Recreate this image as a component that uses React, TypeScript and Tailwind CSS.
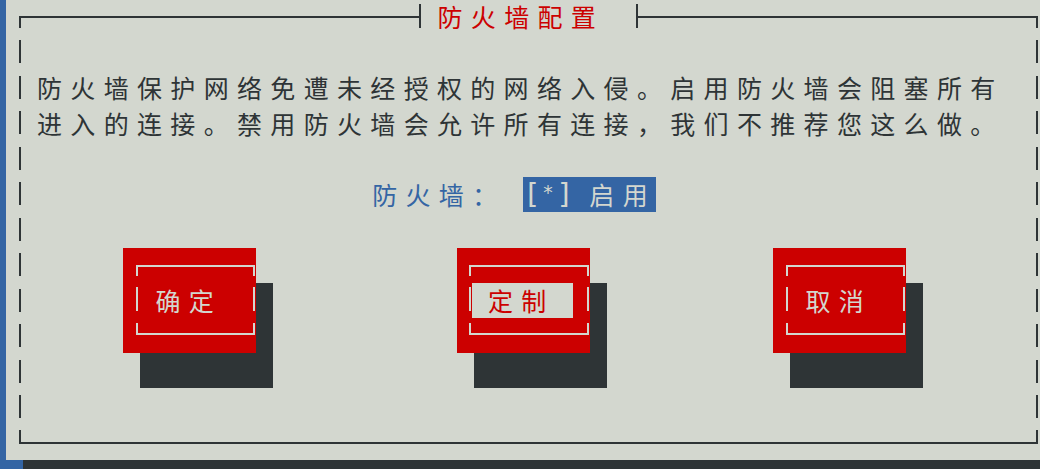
import React from 'react';

const cjk = { fontFamily: '"Noto Sans CJK SC", "Noto Sans", sans-serif' };
const mono = { fontFamily: '"DejaVu Sans Mono", monospace' };

// dashed side border, one dash per terminal row
function Dashes() {
    return (
        <div className="flex flex-col w-[2px] shrink-0">
            {Array.from({ length: 11 }).map((_, i) => (
                <div key={i} className="h-[35.5px] pt-[5.5px]">
                    <div className="h-[23px] bg-[#2e3436]" />
                </div>
            ))}
        </div>
    );
}

function Button({ label, focused }: { label: string; focused?: boolean }) {
    return (
        <div className="relative w-[133px] h-[105px] shrink-0">
            <div className="absolute left-[17px] top-[35px] w-[133px] h-[105px] bg-[#2e3436]" />
            <div className="relative h-full bg-[#cc0000] pt-[17px] pl-[12.7px] pr-[1px]">
                <div className="h-[11.5px] border-t-2 border-x-2 border-[#d3d7cf]" />
                <div className="mt-[6.5px] h-[35px] flex">
                    <div className="w-[2px] h-[24px] mt-[4.5px] bg-[#d3d7cf]" />
                    <div
                        className={
                            focused
                                ? 'ml-[1px] w-[101px] h-full flex items-center pl-[15.5px] bg-[#d3d7cf] text-[#cc0000] text-[25px] leading-none tracking-[8.33px] whitespace-nowrap'
                                : 'ml-[1px] w-[101px] h-full flex items-center pl-[16.5px] text-[#d3d7cf] text-[25px] leading-none tracking-[8.33px] whitespace-nowrap'
                        }
                        style={cjk}
                    >
                        {label}
                    </div>
                    <div className="ml-auto w-[2px] h-[24px] mt-[4.5px] bg-[#d3d7cf]" />
                </div>
                <div className="mt-[5px] h-[12.7px] border-b-2 border-x-2 border-[#d3d7cf]" />
            </div>
        </div>
    );
}

export default function App() {
    return (
        <div className="w-[1040px] h-[469px] bg-[#3465a4] overflow-hidden flex flex-col">
            <div className="ml-[6px] w-[1034px] h-[460px] shrink-0 bg-[#d3d7cf]">
                <div className="ml-[12.5px] w-[1019px] flex flex-col">
                    {/* top border with title */}
                    <div className="h-[34.5px] flex items-start">
                        <div className="w-[400.5px] h-[12px] mt-[16px] border-t-2 border-l-2 border-[#2e3436]" />
                        <div className="w-[2px] h-[24px] mt-[4px] bg-[#2e3436]" />
                        <div
                            className="w-[214.7px] h-[32px] flex items-center pl-[16.5px] text-[25px] leading-none tracking-[8.33px] text-[#cc0000] whitespace-nowrap"
                            style={cjk}
                        >
                            防火墙配置
                        </div>
                        <div className="w-[2px] h-[24px] mt-[4px] bg-[#2e3436]" />
                        <div className="flex-1 h-[12px] mt-[16px] border-t-2 border-r-2 border-[#2e3436]" />
                    </div>

                    <div className="flex h-[390.5px]">
                        <Dashes />
                        <div className="flex-1 flex flex-col">
                            <div className="h-[35.5px]" />
                            <div
                                className="pl-[16.5px] text-[25px] leading-[35.5px] tracking-[8.33px] text-[#2e3436] whitespace-nowrap"
                                style={cjk}
                            >
                                <div>防火墙保护网络免遭未经授权的网络入侵。启用防火墙会阻塞所有</div>
                                <div>进入的连接。禁用防火墙会允许所有连接，我们不推荐您这么做。</div>
                            </div>
                            <div className="h-[35.5px]" />
                            <div className="h-[35.5px] flex items-center pl-[351.7px]">
                                <div
                                    className="w-[133.8px] text-[25px] leading-none tracking-[8.33px] text-[#3465a4] whitespace-nowrap"
                                    style={cjk}
                                >
                                    防火墙：
                                </div>
                                <div className="ml-[17px] w-[133px] h-[35px] bg-[#3465a4] flex items-center text-[#d3d7cf] whitespace-nowrap">
                                    <span className="w-[16.67px] text-[29px] leading-none" style={mono}>[</span>
                                    <span className="w-[16.67px] h-full pt-[6px] text-[19px] leading-none text-center" style={mono}>*</span>
                                    <span className="w-[16.67px] text-[29px] leading-none text-center" style={mono}>]</span>
                                    <span className="w-[16.67px]" />
                                    <span className="text-[25px] leading-none tracking-[8.33px]" style={cjk}>启用</span>
                                </div>
                            </div>
                            <div className="h-[35.5px]" />
                            <div className="flex pl-[102.8px]">
                                <Button label="确定" />
                                <div className="w-[200.4px] shrink-0" />
                                <Button label="定制" focused />
                                <div className="w-[183.6px] shrink-0" />
                                <Button label="取消" />
                            </div>
                        </div>
                        <Dashes />
                    </div>

                    {/* bottom border */}
                    <div className="h-[35.5px]">
                        <div className="mt-[5px] h-[14px] border-b-2 border-x-2 border-[#2e3436]" />
                    </div>
                </div>
            </div>
            <div className="ml-[23px] flex-1 bg-[#2e3436]" />
        </div>
    );
}
